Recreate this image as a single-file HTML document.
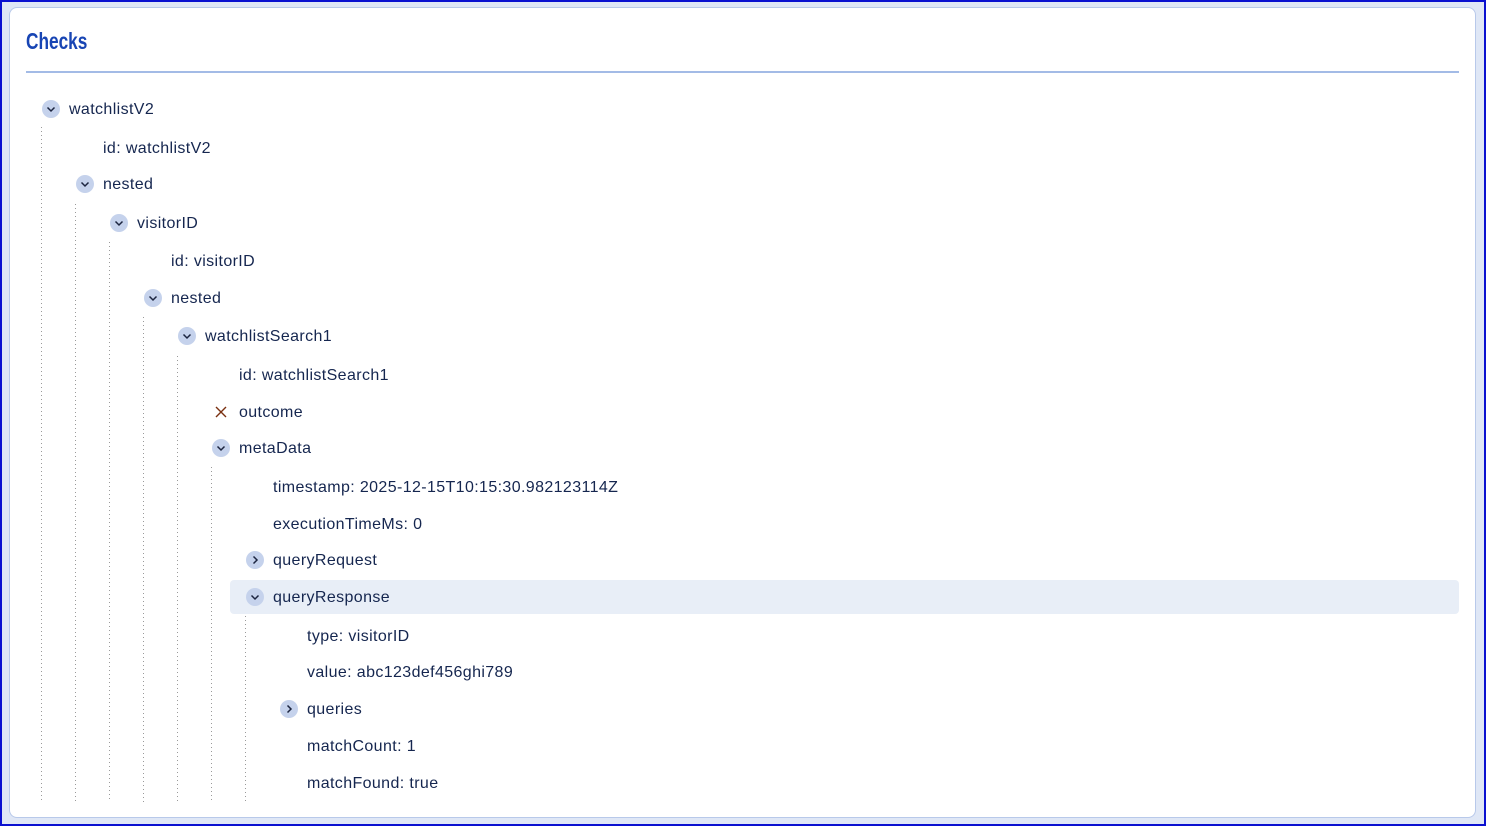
<!DOCTYPE html>
<html><head><meta charset="utf-8"><style>
html,body{margin:0;padding:0}
body{width:1486px;height:826px;background:#dfe7f6;position:relative;overflow:hidden;font-family:"Liberation Sans",sans-serif}
.frame{position:absolute;left:0;top:0;width:1482px;height:822px;border:2px solid #0a10d0;}
.card{position:absolute;left:9px;top:7px;width:1465px;height:809px;background:#fff;border:1px solid #b8c9ea;border-radius:8px}
.title{position:absolute;left:26px;top:28px;font-size:23px;font-weight:bold;color:#1845b4;transform:scaleX(0.75);transform-origin:left top;letter-spacing:0}
.hr{position:absolute;left:26px;top:71px;width:1433px;height:2px;background:#a3bbe6}
.t{position:absolute;font-size:16px;color:#15264f;line-height:20px;white-space:nowrap;letter-spacing:0.38px}
.ic{position:absolute;width:18px;height:18px;border-radius:50%;background:#c5d2ec}
.ic svg{position:absolute;left:0;top:0}
.dl{position:absolute;width:1px;bottom:24px;background:repeating-linear-gradient(to bottom,#9a9a9a 0,#9a9a9a 1px,transparent 1px,transparent 4px)}
.hl{position:absolute;left:230px;top:580px;width:1229px;height:34px;background:#e8eef7;border-radius:4px}
</style></head><body>
<div class="frame"></div>
<div class="card"></div>
<div class="title">Checks</div>
<div class="hr"></div>
<div class="hl"></div>
<div class="dl" style="left:41px;top:127px"></div>
<div class="dl" style="left:75px;top:204px"></div>
<div class="dl" style="left:109px;top:242px"></div>
<div class="dl" style="left:143px;top:317px"></div>
<div class="dl" style="left:177px;top:356px"></div>
<div class="dl" style="left:211px;top:467px"></div>
<div class="dl" style="left:245px;top:616px"></div>
<div id="rows"></div>
<script>
var rows=[[0,109,'d','watchlistV2'],[1,148,'','id: watchlistV2'],[1,184,'d','nested'],[2,223,'d','visitorID'],[3,261,'','id: visitorID'],[3,298,'d','nested'],[4,336,'d','watchlistSearch1'],[5,375,'','id: watchlistSearch1'],[5,412,'x','outcome'],[5,448,'d','metaData'],[6,487,'','timestamp: 2025-12-15T10:15:30.982123114Z'],[6,524,'','executionTimeMs: 0'],[6,560,'r','queryRequest'],[6,597,'d','queryResponse'],[7,636,'','type: visitorID'],[7,672,'','value: abc123def456ghi789'],[7,709,'r','queries'],[7,746,'','matchCount: 1'],[7,783,'','matchFound: true']];
var h='';
rows.forEach(function(r){var cx=51+34*r[0],tx=69+34*r[0];
h+='<div class="t" style="left:'+tx+'px;top:'+(r[1]-9)+'px">'+r[3]+'</div>';
if(r[2]=='d')h+='<div class="ic" style="left:'+(cx-9)+'px;top:'+(r[1]-9)+'px"><svg width="18" height="18"><path d="M5.5 7.5l3.5 3.5 3.5-3.5" fill="none" stroke="#1c2540" stroke-width="1.5"/></svg></div>';
if(r[2]=='r')h+='<div class="ic" style="left:'+(cx-9)+'px;top:'+(r[1]-9)+'px"><svg width="18" height="18"><path d="M7.5 5.5l3.5 3.5-3.5 3.5" fill="none" stroke="#1c2540" stroke-width="1.5"/></svg></div>';
if(r[2]=='x')h+='<svg style="position:absolute;left:'+(cx-9)+'px;top:'+(r[1]-9)+'px" width="18" height="18"><path d="M4 4l10 10M14 4l-10 10" stroke="#7a3010" stroke-width="1.4"/></svg>';
});
document.getElementById('rows').innerHTML=h;
</script>
</body></html>
